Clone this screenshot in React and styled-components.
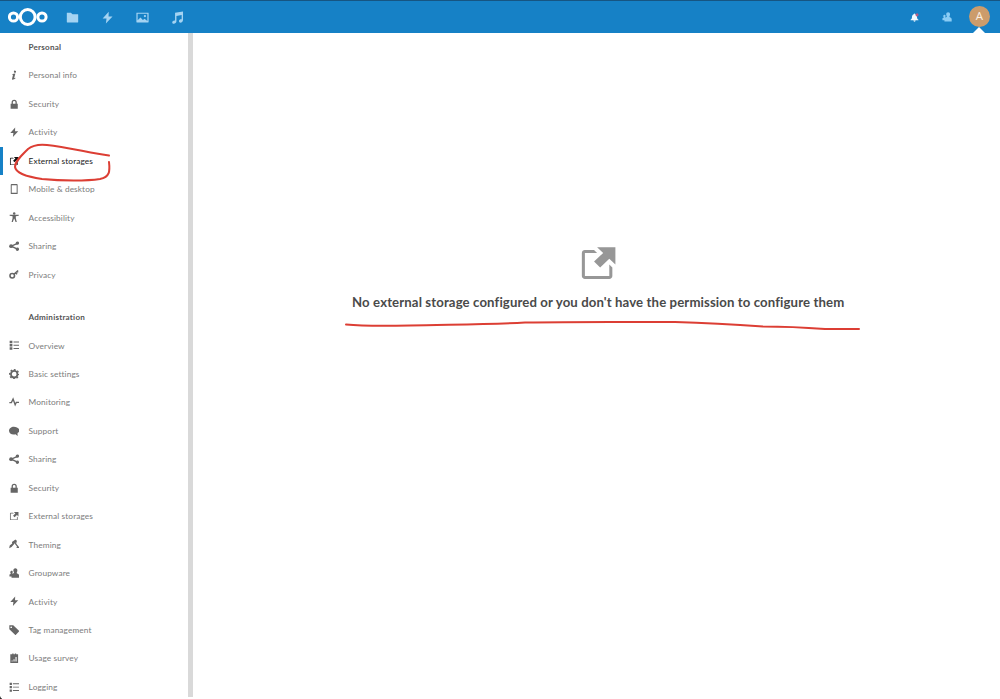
import React from "react";
import styled, { createGlobalStyle } from "styled-components";

const GlobalStyle = createGlobalStyle`
  * {
    box-sizing: border-box;
  }
  body {
    margin: 0;
    background: white;
    font-family: Lato, "Open Sans", sans-serif;
    overflow: hidden;
  }
`;

const Page = styled.div`
  position: relative;
  height: 699px;
  display: flex;
  flex-direction: column;
  overflow: hidden;
`;
const Header = styled.header`
  height: 33px;
  flex: none;
  display: flex;
  align-items: center;
  justify-content: space-between;
  padding: 0 10px 0 8px;
  background-color: #1681c6;
  border-top: 1px solid #165582;
`;
const HeaderGroup = styled.div`
  display: flex;
  align-items: center;
  height: 100%;
`;
const Logo = styled.svg`
  width: 40px;
  height: 20px;
  margin-right: 7px;
`;
const AppLink = styled.a`
  width: 35px;
  display: flex;
  justify-content: center;
  color: #a4d3f2;
`;
const HeaderButton = styled.a`
  width: 33px;
  display: flex;
  justify-content: center;
  color: ${(props) => (props.$bright ? "#f2faff" : "#8accf5")};
`;
const Account = styled.div`
  position: relative;
  height: 100%;
  margin-left: 5.5px;
  display: flex;
  align-items: center;
`;
const Avatar = styled.div`
  width: 21px;
  height: 21px;
  margin-bottom: 1px;
  border-radius: 50%;
  background-color: #cc9c6b;
  color: #fbefe2;
  font-family: "Open Sans", sans-serif;
  font-size: 11.5px;
  line-height: 20.5px;
  text-align: center;
`;
const Caret = styled.div`
  position: absolute;
  bottom: 0;
  left: 4px;
  border: 6.5px solid transparent;
  border-top: 0;
  border-bottom: 6px solid white;
`;
const Body = styled.div`
  flex: 1;
  min-height: 0;
  display: flex;
`;
const Sidebar = styled.nav`
  width: 188px;
  overflow: hidden;
`;
const Scrollbar = styled.div`
  width: 5.4px;
  height: 664px;
  background-color: #d9d9d9;
`;
const Section = styled.section`
  margin-bottom: 14.2px;
`;
const Heading = styled.h2`
  margin: 0;
  height: 28.44px;
  padding-left: 28.5px;
  font-size: 8.1px;
  font-weight: 700;
  line-height: 28.44px;
  letter-spacing: 0.22px;
  color: #555;
`;
const Item = styled.a`
  height: 28.44px;
  display: flex;
  align-items: center;
  padding: 0 0 0.4px 6px;
  border-left: 3px solid ${(props) => (props.$active ? "#1681c6" : "transparent")};
  color: ${(props) => (props.$active ? "#111" : "#666")};
`;
const Label = styled.span`
  margin-left: 9.2px;
  font-size: 8.3px;
  line-height: 12px;
  white-space: nowrap;
  letter-spacing: 0.1px;
  color: ${(props) => (props.$active ? "#222" : "#7c7c7c")};
`;
const Content = styled.main`
  flex: 1;
  display: flex;
  flex-direction: column;
  align-items: center;
  padding: 209.6px 0 0 3px;
  color: #979797;
`;
const Message = styled.h1`
  margin: 9.8px 0 0;
  font-size: 13.2px;
  font-weight: 700;
  line-height: 18px;
  white-space: nowrap;
  letter-spacing: 0.11px;
  color: #4a4a4a;
`;
const Marker = styled.svg`
  position: absolute;
  top: 0;
  left: 0;
  pointer-events: none;
`;
const Svg = styled.svg`
  display: block;
  flex: none;
  width: ${(props) => props.$size}px;
  height: ${(props) => props.$size}px;
  fill: currentColor;
`;

const shapes = {
  info: (
    <path d="M9.6 1a1.7 1.7 0 1 0 0 3.3 1.7 1.7 0 0 0 0-3.3zM5 6.6c1.6-.8 3-1.2 4.8-1.1L8 12.3c-.1.6.3.6 1.7-.2l.3.7C8.3 14.3 7 15 5.8 15c-1 0-1.3-.7-1-1.9L6.2 7.4 4.8 7.5z" />
  ),
  lock: (
    <path d="M8 1a4 4 0 0 0-4 4v2.5H2.5V15h11V7.5H12V5a4 4 0 0 0-4-4zm0 2a2 2 0 0 1 2 2v2.5H6V5a2 2 0 0 1 2-2z" />
  ),
  activity: <path d="M9.5.8 2 9.3h4.8L6 15.5l8.2-8.8H9.3z" />,
  external: (
    <path d="m7.4515 1.6186 2.3806 2.2573-3.5709 3.386 2.3806 2.2573 3.5709-3.386 2.3806 2.2573V1.6186zm-4.7612 1.1286c-.6594 0-1.1903.5034-1.1903 1.1286v9.029c0 .6253.5309 1.1286 1.1903 1.1286h9.522c.6594 0 1.1903-.5034 1.1903-1.1286v-3.386l-1.19-1.1287v4.5146H2.6903v-9.029h4.761L6.2613 2.7472z" />
  ),
  phone: (
    <path
      fillRule="evenodd"
      d="M4 0h8c.7 0 1.3.5 1.3 1.2v13.6c0 .7-.6 1.2-1.3 1.2H4c-.7 0-1.3-.5-1.3-1.2V1.2C2.7.5 3.3 0 4 0zm.2 2v11.5h7.6V2z"
    />
  ),
  person: (
    <>
      <circle cx="8" cy="2.2" r="1.9" />
      <path d="M1 4.3h14v1.6l-4.5.7v3L12 15.5h-1.9L8.3 10.5h-.6L5.9 15.5H4l1.5-5.9v-3L1 5.9z" />
    </>
  ),
  share: (
    <>
      <path d="M13 3.5 3.5 8l9.5 4.5" fill="none" stroke="currentColor" strokeWidth="2.2" />
      <circle cx="12.9" cy="3.3" r="2.6" />
      <circle cx="3.2" cy="8" r="2.9" />
      <circle cx="12.9" cy="12.7" r="2.6" />
    </>
  ),
  key: (
    <>
      <circle cx="5" cy="10.5" r="3.5" fill="none" stroke="currentColor" strokeWidth="2.4" />
      <path d="m7.5 8.3 6.5-6M10.5 6l2 2M12.5 3.6l1.5 1.6" stroke="currentColor" strokeWidth="2.2" />
    </>
  ),
  overview: (
    <path d="M1 1h4.2v4H1zM1 6h4.2v4H1zM1 11h4.2v4H1zM7 2.2h8.5v1.6H7zM7 7.2h8.5v1.6H7zM7 12.2h8.5v1.6H7z" />
  ),
  gear: (
    <>
      <circle cx="8" cy="8" r="5" fill="none" stroke="currentColor" strokeWidth="2.8" />
      <circle
        cx="8"
        cy="8"
        r="6.9"
        fill="none"
        stroke="currentColor"
        strokeWidth="2.2"
        strokeDasharray="2.9 2.519"
        strokeDashoffset="1.45"
      />
    </>
  ),
  monitoring: (
    <path d="M.5 8.7h3.2L6.3 3l3.2 9 1.8-3.8h4.2" fill="none" stroke="currentColor" strokeWidth="2.1" />
  ),
  comment: (
    <path d="M7.5 1C3.4 1 0 3.7 0 7.2s3 6 7.2 6c1 0 2-.2 2.8-.4l3.3 2.7-.2-4.6c1.8-1 2.9-2.2 2.9-3.9C16 3.5 12 1 7.5 1z" />
  ),
  theming: (
    <>
      <path d="M4.5 4.7 10 .7l2 2.5L4 12.5.3 14.2l.8-4.2L5 7z" />
      <path d="m11 2.5-.8 5 4.500 5.500h-3" fill="none" stroke="currentColor" strokeWidth="1.9" />
    </>
  ),
  group: (
    <path d="M9.8.5C7.8.5 6.7 2 6.7 3.9c0 1.1.5 2 .9 2.6v1.3l-2.2 1C5 8.4 5.1 8 5.4 7.5 6.3 5.7 5.5 4.2 4.2 4.2S2 5.2 2 6.5c0 .8.3 1.4.6 1.8v.9L.7 10v3h3.2v2H15.5v-4.3c-.7-1.3-1.8-2-3.5-2.8V6.500c.5-.7.9-1.500.9-2.600 0-1.900-1.100-3.400-3.100-3.400z" />
  ),
  tag: (
    <path
      fillRule="evenodd"
      d="M.5.5h6L16 9.3l-6 6.4L.5 6.6zM3.4 2.2a1.3 1.3 0 1 0 0 2.6 1.3 1.3 0 0 0 0-2.6z"
    />
  ),
  survey: (
    <path
      fillRule="evenodd"
      d="M2 2h3V.7h2V2h2V.7h2V2h3v13.3H2zm2 9.5V13h1.5v-1.5zm3-2V13h1.5V9.5zM10 6v7h1.7V6z"
    />
  ),
  logging: (
    <path d="M1 1h3.5v3.5H1zM1 6.2h3.5v3.5H1zM1 11.4h3.5v3.5H1zM6 2.1h9.5v1.3H6zM6 7.3h9.5v1.3H6zM6 12.5h9.5v1.3H6z" />
  ),
  folder: <path d="M1.5 2c-.3 0-.5.2-.5.5v11c0 .3.2.5.5.5h13c.3 0 .5-.2.5-.5v-9c0-.3-.2-.5-.5-.5H8L6 2z" />,
  picture: (
    <path
      fillRule="evenodd"
      d="M1 2h14c.3 0 .5.2.5.5v11c0 .3-.2.5-.5.5H1c-.3 0-.5-.2-.5-.5v-11c0-.3.2-.5.5-.5zm1 1.5v8l3.5-3.5 3 3 2-1.5 3.5 2.8V3.5zm9 1.3a1.4 1.4 0 1 0 0 2.8 1.4 1.4 0 0 0 0-2.8z"
    />
  ),
  music: (
    <path d="M5 2.2 14.8.5v10.7c0 3.5-5 4.3-5 1.5 0-1.8 1.6-2.6 3.3-2.4V4.8L6.7 6v6.7c0 3.5-5.2 4.1-5.2 1.4 0-1.8 1.7-2.7 3.5-2.4z" />
  ),
  bell: (
    <>
      <path d="M8 1c-.8 0-1.3.5-1.3 1.3C4.3 3.2 3.5 5.5 3.5 7.5c0 2.3-.8 3.3-2.5 4.3V13h14v-1.2c-1.7-1-2.5-2-2.5-4.3 0-2-.8-4.3-3.2-5.2C9.3 1.500 8.800 1 8 1zM6 13.500h4a2 2 0 0 1-4 0z" />
      <circle cx="12.5" cy="3.3" r="2.7" fill="#b65d83" />
    </>
  ),
};

const Icon = ({ name, size = 10.4 }) => (
  <Svg viewBox="0 0 16 16" $size={size}>
    {shapes[name]}
  </Svg>
);

const apps = ["folder", "activity", "picture", "music"];

const sections = [
  {
    title: "Personal",
    items: [
      { icon: "info", label: "Personal info" },
      { icon: "lock", label: "Security" },
      { icon: "activity", label: "Activity" },
      { icon: "external", label: "External storages", active: true },
      { icon: "phone", label: "Mobile & desktop" },
      { icon: "person", label: "Accessibility" },
      { icon: "share", label: "Sharing" },
      { icon: "key", label: "Privacy" },
    ],
  },
  {
    title: "Administration",
    items: [
      { icon: "overview", label: "Overview" },
      { icon: "gear", label: "Basic settings" },
      { icon: "monitoring", label: "Monitoring" },
      { icon: "comment", label: "Support" },
      { icon: "share", label: "Sharing" },
      { icon: "lock", label: "Security" },
      { icon: "external", label: "External storages" },
      { icon: "theming", label: "Theming" },
      { icon: "group", label: "Groupware" },
      { icon: "activity", label: "Activity" },
      { icon: "tag", label: "Tag management" },
      { icon: "survey", label: "Usage survey" },
      { icon: "logging", label: "Logging" },
    ],
  },
];

const App = () => {
  return (
    <Page>
      <GlobalStyle />
      <Header>
        <HeaderGroup>
          <Logo viewBox="0 0 40 20" fill="none" stroke="white" strokeWidth="3">
            <circle cx="5.5" cy="10" r="4.1" />
            <circle cx="19.7" cy="10" r="7.4" />
            <circle cx="34" cy="10" r="4.1" />
          </Logo>
          {apps.map((app) => (
            <AppLink key={app}>
              <Icon name={app} size={13} />
            </AppLink>
          ))}
        </HeaderGroup>
        <HeaderGroup>
          <HeaderButton $bright>
            <Icon name="bell" size={9} />
          </HeaderButton>
          <HeaderButton>
            <Icon name="group" size={10} />
          </HeaderButton>
          <Account>
            <Avatar>A</Avatar>
            <Caret />
          </Account>
        </HeaderGroup>
      </Header>
      <Body>
        <Sidebar>
          {sections.map((section) => (
            <Section key={section.title}>
              <Heading>{section.title}</Heading>
              {section.items.map((item) => (
                <Item key={item.label} $active={item.active}>
                  <Icon name={item.icon} />
                  <Label $active={item.active}>{item.label}</Label>
                </Item>
              ))}
            </Section>
          ))}
        </Sidebar>
        <Scrollbar />
        <Content>
          <Icon name="external" size={41} />
          <Message>No external storage configured or you don't have the permission to configure them</Message>
        </Content>
      </Body>
      <Marker width="1000" height="699" fill="none" stroke="#dc3e34" strokeWidth="2" strokeLinecap="round">
        <path d="M109 155.500C90 153 67 147 47 145c-9-1-14 0-19 4-6 6-13 12-13 18 1 7 13 10 27 12 20 2 45 2 58 0 10-2 10-8 9-17" />
        <path d="M346 324.500c20 2 42 1.500 64 1 40-1 80-1 115-3 55-1 100-.5 150-.5 35 1 60 2.500 88 4.500 20 0 42 1 62 2.500h34" />
        <path d="M0 697q0 2 2 2H0z" fill="#111" stroke="#111" strokeWidth=".6" />
      </Marker>
    </Page>
  );
};

export default App;
